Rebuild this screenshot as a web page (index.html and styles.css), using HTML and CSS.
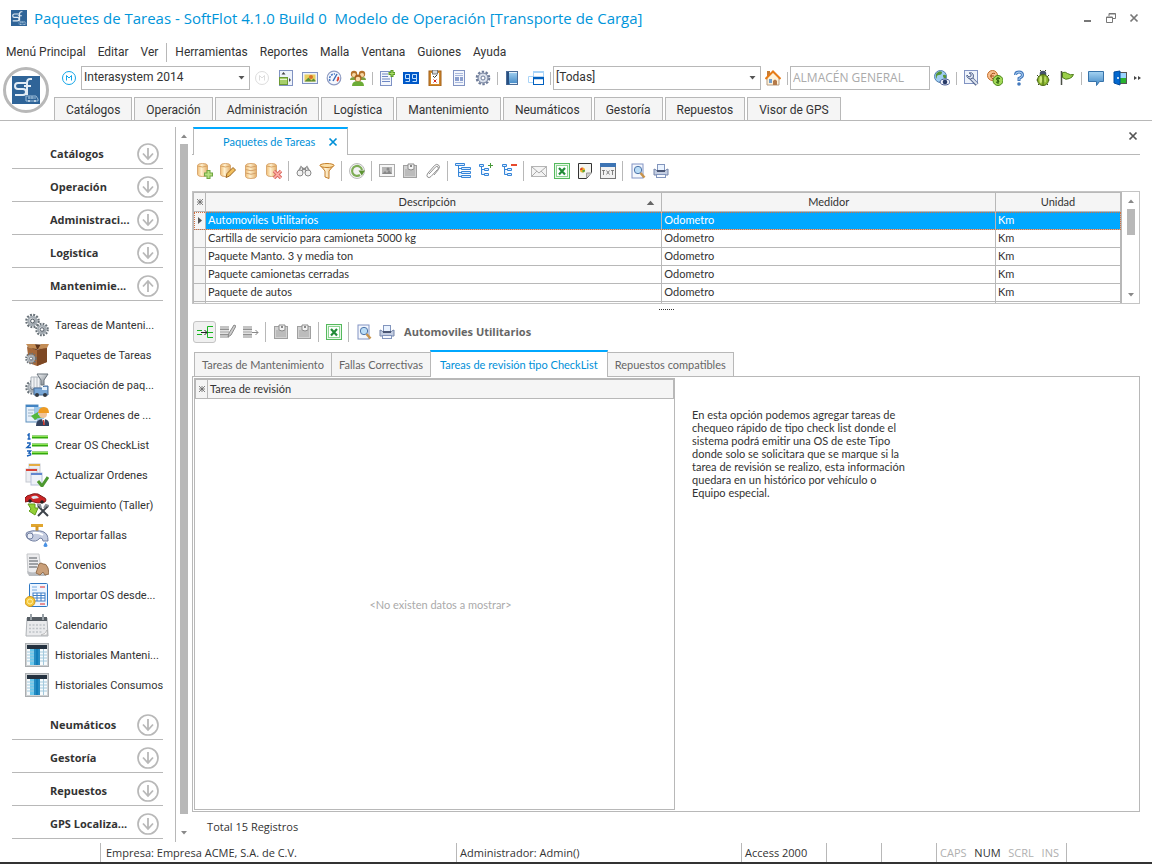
FILE: index.html
```html
<!DOCTYPE html>
<html lang="es">
<head>
    <meta charset="UTF-8">
    <meta name="viewport" content="width=device-width, initial-scale=1.0">
    <title>Paquetes de Tareas - SoftFlot</title>
    <link rel="stylesheet" href="styles.css">
</head>
<body>
<svg class="sprite" aria-hidden="true">
    <defs>
        <linearGradient id="gold" x1="0" y1="0" x2="1" y2="0"><stop offset="0" stop-color="#f0bc72"/><stop offset=".4" stop-color="#fff1d0"/><stop offset="1" stop-color="#e3ae68"/></linearGradient>
        <linearGradient id="steel" x1="0" y1="0" x2="1" y2="1"><stop offset="0" stop-color="#f4f6f8"/><stop offset="1" stop-color="#737c84"/></linearGradient>
        <linearGradient id="sky" x1="0" y1="0" x2="0" y2="1"><stop offset="0" stop-color="#a5d3f2"/><stop offset="1" stop-color="#3f86c4"/></linearGradient>
    </defs>

    <symbol id="logo" viewBox="0 0 28 28">
        <rect width="28" height="28" fill="#2f6498"/>
        <path d="M14 7H6q-3 0-3 3t3 3h5q3 0 3 3t-3 3H3" fill="none" stroke="#e4edf5" stroke-width="2"/>
        <path d="M20 3h-2q-3 0-3 4v12M12 10h7" fill="none" stroke="#e4edf5" stroke-width="2"/>
        <path d="M14 20h10l2 3v2H14z" fill="none" stroke="#9cbcd8"/>
        <path d="M16 22h8M17 20v3M20 20v3" stroke="#9cbcd8"/>
        <circle cx="17" cy="25" r="1" fill="#d6e4ef"/><circle cx="23" cy="25" r="1" fill="#d6e4ef"/>
    </symbol>

    <symbol id="clockm" viewBox="0 0 16 16">
        <circle cx="8" cy="8" r="6.500" fill="#fff" stroke="currentColor"/>
        <path d="M5.500 10.500V5.500L8 8l2.500-2.500v5" fill="none" stroke="currentColor"/>
    </symbol>
    <symbol id="layout" viewBox="0 0 16 16">
        <rect x="1.500" y=".5" width="13" height="15" fill="#eef3fb" stroke="#8193c2"/>
        <path d="M3.500 4.500h4L5.500 2zM11 8v4l2-2z" fill="#444"/>
        <rect x="1.500" y="7.500" width="8" height="7" fill="#a7cf6a" stroke="#6d9a35"/><path d="M2 9.500h7" stroke="#e6f4d0"/>
    </symbol>
    <symbol id="photo" viewBox="0 0 16 16">
        <rect x=".5" y="2.500" width="15" height="11" fill="#eef3fb" stroke="#8193c2"/>
        <rect x="2.500" y="4.500" width="11" height="7" fill="#e9cf5e"/>
        <path d="M2.500 11.500l4-4 3 3 2-2 2 2v1z" fill="#5d8f37"/><circle cx="9" cy="7" r="2" fill="#d8732a"/>
    </symbol>
    <symbol id="gauge" viewBox="0 0 16 16">
        <circle cx="8" cy="8" r="6.800" fill="#f5f8fd" stroke="#8e9bc2" stroke-width="1.200"/>
        <path d="M4 11a5 5 0 0 1 5-7" fill="none" stroke="#4978c2" stroke-width="1.500" stroke-dasharray="2 1"/>
        <path d="M7 11l4-7" stroke="#3c6bb5" stroke-width="1.500"/><path d="M12 7q1 2-1 4" fill="none" stroke="#e0402c" stroke-width="1.800"/>
    </symbol>
    <symbol id="people" viewBox="0 0 16 16">
        <path d="M0 10q0-3 4-3 2 0 4 1 2-1 4-1 4 0 4 3z" fill="#7fa03f"/>
        <circle cx="4" cy="4" r="3.200" fill="#b5722c"/><circle cx="12" cy="4" r="3.200" fill="#b5722c"/>
        <circle cx="4" cy="5" r="2" fill="#f7d7a3"/><circle cx="12" cy="5" r="2" fill="#f7d7a3"/>
        <path d="M2 16q0-5 6-5t6 5z" fill="#6cac36"/><circle cx="8" cy="8" r="3.500" fill="#a9611f"/><circle cx="8" cy="9" r="2.300" fill="#fbdcae"/>
    </symbol>
    <symbol id="listadd" viewBox="0 0 16 16">
        <rect x="1.500" y="1.500" width="11" height="14" fill="#f3f6fc" stroke="#7e92c5"/>
        <path d="M3 4h6M3 6.500h6M3 9h8M3 11.500h8" stroke="#6d87c4"/>
        <path d="M13 0v7M9.500 3.500h7" stroke="#5a9a25" stroke-width="3"/><path d="M13 1v5M10.500 3.500h5" stroke="#a9dc69"/>
    </symbol>
    <symbol id="gg" viewBox="0 0 16 16">
        <rect y="2" width="16" height="12" fill="#0058c8"/>
        <path d="M6 4.500H2.500v4H6M6.500 4v7.500h-4M13 4.500H9.500v4H13M13.500 4v7.500h-4" fill="none" stroke="#bfe0ff"/>
    </symbol>
    <symbol id="clipboard" viewBox="0 0 16 16">
        <rect x="2" y="1" width="12" height="15" fill="#d58b2c" stroke="#9e5c16"/>
        <rect x="4" y="3" width="8" height="11" fill="#fff"/><rect x="5.500" y="0" width="5" height="4" fill="#d6d9de" stroke="#777"/>
        <path d="M6 6l1.500 1.500L10 5" fill="none" stroke="#333"/><path d="M6.500 9.500l3 3m0-3l-3 3" stroke="#d52c1e"/>
    </symbol>
    <symbol id="form" viewBox="0 0 16 16">
        <rect x="2.500" y=".5" width="11" height="15" fill="#f3f6fc" stroke="#8193c2"/>
        <path d="M4 3.500h8M4 5.500h8M4 12.500h8" stroke="#a9b8dc"/><rect x="4" y="7" width="4" height="4" fill="#8b9fce"/><rect x="9" y="7" width="3" height="4" fill="#8b9fce"/>
    </symbol>
    <symbol id="gear" viewBox="0 0 16 16">
        <circle cx="8" cy="8" r="6.300" fill="none" stroke="#6d7b98" stroke-width="2" stroke-dasharray="2.400 1.550"/>
        <circle cx="8" cy="8" r="5" fill="#dbe1ec" stroke="#6d7b98"/><circle cx="8" cy="8" r="2" fill="#fff" stroke="#6d7b98"/>
    </symbol>
    <symbol id="book" viewBox="0 0 16 16">
        <rect x="2.500" y="1.500" width="11" height="13" fill="url(#sky)" stroke="#4a6c98"/><path d="M4 2v12.500" stroke="#284f80" stroke-width="2"/><path d="M5 2.500h8M6 13.500h7" stroke="#e4f0fa"/>
    </symbol>
    <symbol id="windows" viewBox="0 0 16 16">
        <path d="M5.500 1.500h10v5M.5 6.500h5v6h-5zM5.500 1v5" fill="none" stroke="#a9d4f8"/><path d="M5 2h11" stroke="#a9d4f8" stroke-width="2"/>
        <rect x="5.500" y="7.500" width="10" height="7" fill="#fff" stroke="#0060c0"/><path d="M5 8h11" stroke="#0060c0" stroke-width="2.500"/>
    </symbol>
    <symbol id="house" viewBox="0 0 16 16">
        <rect x="2" y="1" width="3" height="5" fill="#c77d35"/><path d="M2 8l6-6 6 6v7H2z" fill="#fff2d8" stroke="#b69b80"/>
        <path d="M.5 9L8 1.500 15.500 9" fill="none" stroke="#e67b16" stroke-width="2"/>
        <path d="M8 15v-4q2-3 4 0v4z" fill="#b57a49"/><path d="M4 9h3v4H4z" fill="#709fd0"/>
    </symbol>
    <symbol id="globe" viewBox="0 0 16 16">
        <circle cx="6.500" cy="6.500" r="6" fill="#9ecdf2" stroke="#537fae"/><path d="M2 4q3-4 6-2 0 3-3 3T3 9q-2-2-1-5M9 5q4-1 3 3-3 1-3-3" fill="#559538"/>
        <ellipse cx="11" cy="12" rx="5" ry="3" fill="#f5f7ff" stroke="#4a5d93"/><circle cx="11" cy="12" r="2.300" fill="#293b68"/>
    </symbol>
    <symbol id="wrench" viewBox="0 0 16 16">
        <rect x="1.500" y=".5" width="13" height="13" fill="#eef3fb" stroke="#8193c2"/>
        <path d="M7 7l7 7.500" stroke="#586991" stroke-width="4"/><path d="M7 7l7 7" stroke="#dde4f1" stroke-width="2"/>
        <path d="M6 3q3-1 4 1t0 4q-3 2-5 0T4 5l2 2 2-1V4z" fill="#dde4f1" stroke="#586991"/>
    </symbol>
    <symbol id="coins" viewBox="0 0 16 16">
        <circle cx="5.500" cy="5.500" r="5" fill="#f8c090" stroke="#c36e2c"/><path d="M8 3.500q-4-1-4 2.500t4 2.500M3 6h4" fill="none" stroke="#a8521d"/>
        <circle cx="11" cy="10.500" r="5" fill="#a2d957" stroke="#4b8517"/><path d="M13 8.500q-4-1-3.500.8.500 1.200 2 1.500 2 1-2.500 1.500M11 7v7" fill="none" stroke="#245509"/>
    </symbol>
    <symbol id="help" viewBox="0 0 16 16">
        <path d="M4.500 5q0-3 3.500-3t3.500 3Q11.500 7 8 8.500V11" fill="none" stroke="#4379bd" stroke-width="3"/><path d="M4.500 5q0-3 3.500-3t3.500 3Q11.500 7 8 8.500V10" fill="none" stroke="#b4d5f4"/>
        <circle cx="8" cy="14" r="1.800" fill="#4379bd"/>
    </symbol>
    <symbol id="bug" viewBox="0 0 16 16">
        <path d="M2 5l3 3M14 5l-3 3M1.500 10H14.500M3 15l3-3M13 15l-3-3M5 0l2 2M11 0L9 2" stroke="#3b4a20"/>
        <circle cx="8" cy="4" r="3.300" fill="#45536a"/><ellipse cx="8" cy="10" rx="5.500" ry="5.500" fill="#8fb931" stroke="#4b6a14"/><path d="M8 5v10" stroke="#4b6a14"/><ellipse cx="5.800" cy="9.500" rx="1.300" ry="3.500" fill="#cfe87f"/><ellipse cx="10.200" cy="9.500" rx="1" ry="3" fill="#b9d868"/>
    </symbol>
    <symbol id="flag" viewBox="0 0 16 16">
        <path d="M2.500 1v14" stroke="#4a4f45" stroke-width="1.500"/><path d="M3.500 2.500q3-1 5 1 3 2 6 1-1 3-4 4-4 2-7-1z" fill="#9bcf4a" stroke="#4e7d1b"/>
    </symbol>
    <symbol id="bubble" viewBox="0 0 16 16"><path d="M.5 1.500h15v10h-4l-3 4v-4h-8z" fill="url(#sky)" stroke="#3773aa"/></symbol>
    <symbol id="door" viewBox="0 0 16 16">
        <rect x="6.500" y="2.500" width="8" height="11" fill="#fff" stroke="#555"/><rect x="8" y="8" width="6" height="5" fill="#29b22f"/><rect x="8" y="3" width="6" height="5" fill="#9bd4ff"/>
        <path d="M2 2l6-1v14l-6-2z" fill="#0368cf" stroke="#014a9c"/><circle cx="6" cy="8" r="1" fill="#fff"/>
    </symbol>

    <symbol id="db" viewBox="0 0 16 16">
        <path d="M2.500 2.500q0-2 5.500-2t5.500 2v11q0 2-5.500 2t-5.500-2z" fill="url(#gold)" stroke="#d9a872"/>
        <path d="M2.500 3q5.500 2.500 11 0M2.500 6.500q5.500 2.500 11 0M2.500 10q5.500 2.500 11 0" fill="none" stroke="#d3a069"/>
    </symbol>
    <symbol id="dbbase" viewBox="0 0 16 16">
        <path d="M.5 2.500q0-2 5-2t5 2v9q0 2-5 2t-5-2z" fill="url(#gold)" stroke="#d9a872"/><path d="M.5 3q5 2 10 0" fill="none" stroke="#d9a463"/>
    </symbol>
    <symbol id="dbadd" viewBox="0 0 16 16"><use href="#dbbase"/><path d="M11.500 7v9M7 11.500h9" stroke="#6fa643" stroke-width="4"/><path d="M11.500 8v7M8 11.500h7" stroke="#b6e07f" stroke-width="2"/></symbol>
    <symbol id="dbedit" viewBox="0 0 16 16"><use href="#dbbase"/><path d="M6 14.500l1-4 6-6 2.500 2.500-6 6z" fill="#f1bf5e" stroke="#9a6420"/></symbol>
    <symbol id="dbdel" viewBox="0 0 16 16"><use href="#dbbase"/><path d="M8 8l7 7m0-7l-7 7" stroke="#d86a62" stroke-width="3.500"/><path d="M8 8l7 7m0-7l-7 7" stroke="#ffb0a8" stroke-width="1.500"/></symbol>
    <symbol id="binocular" viewBox="0 0 16 16">
        <path d="M5.500 3L2 9M10.500 3L14 9M6.500 4v6M9.500 4v6" stroke="#999" stroke-width="1.500"/><path d="M6 6h4" stroke="#8c8c8c" stroke-width="2"/>
        <circle cx="4" cy="10" r="3" fill="#f2f2f2" stroke="#888"/><circle cx="12" cy="10" r="3" fill="#f2f2f2" stroke="#888"/>
    </symbol>
    <symbol id="funnel" viewBox="0 0 16 16"><path d="M1 2l5 6v6l4 1.500V8l5-6z" fill="url(#gold)" stroke="#c47f2c"/><ellipse cx="8" cy="2.500" rx="7" ry="2" fill="#fce1aa" stroke="#c47f2c"/></symbol>
    <symbol id="refresh" viewBox="0 0 16 16">
        <circle cx="8" cy="8" r="7.500" fill="#f3f3f3" stroke="#bbb"/><path d="M11 12A5 5 0 1 1 13 7" fill="none" stroke="#7dac55" stroke-width="2.200"/><path d="M9.500 7.500h6.500l-3.200 5z" fill="#5d9433"/>
    </symbol>
    <symbol id="photogray" viewBox="0 0 16 16">
        <rect x=".5" y="1.500" width="15" height="12" fill="#f6f6f6" stroke="#aaa"/><rect x="3" y="4" width="10" height="7" fill="#b5b5b5"/><path d="M3 11l3-3 2 2 2-3 3 4z" fill="#888"/><circle cx="9" cy="6" r="1.500" fill="#888"/>
    </symbol>
    <symbol id="paste" viewBox="0 0 16 16">
        <rect x="1.500" y="2.500" width="13" height="12" fill="#d2d2d2" stroke="#a0a0a0"/><rect x="3" y="6" width="10" height="7" fill="#bcbcbc"/><path d="M6 1h6v5q-3 2-6 0z" fill="#f4f4f4" stroke="#8c8c8c"/><rect x="8" y="2" width="2" height="2" fill="#888"/>
    </symbol>
    <symbol id="clip" viewBox="0 0 16 16"><path d="M4 11l6.500-7q1.500-1.500 2.500 0t-.5 2.500L6 13.500q-2 2-3.500.5T3 10l6.500-7.500q2-2 4-.5t0 4.500L9 12" fill="none" stroke="#909090"/></symbol>
    <symbol id="tree" viewBox="0 0 16 16"><path d="M.5.500h9v2h-9zM6.500 4.500h9v2h-9zM6.500 8.500h9v2h-9zM6.500 12.500h9v2h-9zM3.500 3v10.500h3M3.500 5.500h3M3.500 9.500h3" fill="#dcecff" stroke="#3585d8"/></symbol>
    <symbol id="treeplus" viewBox="0 0 16 16"><path d="M1.500 1.500h4v2h-4zM6.500 5.500h4v2h-4zM6.500 10.500h4v2h-4zM3.500 4v7.500h3M3.500 6.500h3" fill="#dcecff" stroke="#3585d8"/><path d="M12.500 0v5M10 2.500h5" stroke="#4a9a3c"/></symbol>
    <symbol id="treeminus" viewBox="0 0 16 16"><path d="M1.500 1.500h4v2h-4zM6.500 5.500h4v2h-4zM6.500 10.500h4v2h-4zM3.500 4v7.500h3M3.500 6.500h3" fill="#dcecff" stroke="#3585d8"/><path d="M10 2h6" stroke="#e6492d" stroke-width="2"/></symbol>
    <symbol id="mail" viewBox="0 0 16 16"><rect x=".5" y="3.500" width="15" height="10" fill="#f4f4f4" stroke="#b5b5b5"/><path d="M1 4l7 6 7-6M1 13l5-5M15 13l-5-5" fill="none" stroke="#aaa"/></symbol>
    <symbol id="excel" viewBox="0 0 16 16">
        <rect x=".5" y=".5" width="15" height="15" fill="#e8f8e8" stroke="#55b95d"/><rect x="2.500" y="2.500" width="11" height="11" fill="#fff" stroke="#8bd491"/>
        <path d="M5 5l6 6.500M11 5l-6 6.500" stroke="#238b38" stroke-width="2.200"/>
    </symbol>
    <symbol id="chartdoc" viewBox="0 0 16 16"><path d="M1.500.5h13v9l-5 6h-8z" fill="#f4f4f0" stroke="#333"/><path d="M9.500 15V10h5" fill="#ccc" stroke="#999"/><circle cx="5.500" cy="7" r="2.500" fill="#f0b32a"/><path d="M5.500 7V4.500A2.500 2.500 0 0 0 3 7z" fill="#d9432d"/><path d="M5.500 7H8a2.500 2.500 0 0 1-2.500 2.500z" fill="#58a43c"/></symbol>
    <symbol id="txt" viewBox="0 0 16 16"><rect x=".5" y=".5" width="15" height="15" fill="#f2f2f2" stroke="#777"/><rect x="0" y="0" width="16" height="4" fill="#3d74b4"/><path d="M2 7.500h3M3.500 7.500V12M6.500 7.500l3 4m0-4l-3 4M11 7.500h3M12.500 7.500V12" stroke="#666" stroke-width=".8"/></symbol>
    <symbol id="preview" viewBox="0 0 16 16"><rect x="2" y="1" width="11" height="14" fill="#f4f7fd" stroke="#8294c3"/><circle cx="8" cy="7" r="3.700" fill="#b9dcf6" stroke="#4e73a8"/><path d="M10.500 10l4 4.500" stroke="#c8934b" stroke-width="2.500"/></symbol>
    <symbol id="print" viewBox="0 0 16 16"><rect x="4.500" y="1.500" width="7" height="6" fill="#eaf3ff" stroke="#8295bd"/><path d="M1 6q3 1 3 2h8q0-1 3-2v6H1z" fill="#c4cee2" stroke="#7485aa"/><path d="M4 8h8" stroke="#4a5674" stroke-width="2"/><rect x="3.500" y="11.500" width="9" height="3" fill="#f7faff" stroke="#8295bd"/></symbol>
    <symbol id="rowin" viewBox="0 0 16 16"><path d="M16 2.500h-5.500v11H16M10.500 8.500H16" fill="none" stroke="#14b61c"/><path d="M0 6.500h5M0 10.500h5" stroke="#14b61c"/><path d="M4 8.500h6M7.500 6L10 8.500 7.500 11" fill="none" stroke="#222"/></symbol>
    <symbol id="rowedit" viewBox="0 0 16 16"><path d="M0 3.500h9M0 8h9M0 12.500h9" stroke="#c4c4c4" stroke-width="3"/><path d="M0 5.500h9M0 10.500h9" stroke="#909090"/><path d="M8 13l1-4 5-8 2 1-5 9z" fill="#ccc" stroke="#888"/></symbol>
    <symbol id="rowout" viewBox="0 0 16 16"><path d="M0 3.500h9M0 8h9M0 12.500h9" stroke="#c4c4c4" stroke-width="3"/><path d="M0 5.500h9M0 10.500h9" stroke="#909090"/><path d="M9 8.500h6M12.500 6L15 8.500 12.500 11" fill="none" stroke="#888"/></symbol>
    <symbol id="down" viewBox="0 0 22 22"><circle cx="11" cy="11" r="10" fill="none" stroke="#b8b8b8" stroke-width="1.700"/><path d="M11 5v11M6 10.500l5 5.500 5-5.500" fill="none" stroke="#b8b8b8" stroke-width="1.800"/></symbol>
    <symbol id="up" viewBox="0 0 22 22"><circle cx="11" cy="11" r="10" fill="none" stroke="#b8b8b8" stroke-width="1.700"/><path d="M11 17V6M6 11.500L11 6l5 5.500" fill="none" stroke="#b8b8b8" stroke-width="1.800"/></symbol>
    <symbol id="caret" viewBox="0 0 6 4"><path d="M0 0h6L3 3.500z" fill="currentColor"/></symbol>
    <symbol id="cross" viewBox="0 0 10 10"><path d="M1.500 1.500l7 7m0-7l-7 7" stroke="currentColor" stroke-width="1.700"/></symbol>
    <symbol id="star" viewBox="0 0 8 8"><path d="M4 1v6M1 4h6M1 1l6 6M7 1L1 7" stroke="#666" stroke-width=".8"/></symbol>

    <symbol id="cog" viewBox="0 0 16 16">
        <circle cx="8" cy="8" r="6.500" fill="none" stroke="#687178" stroke-width="2.500" stroke-dasharray="2 1.400"/>
        <circle cx="8" cy="8" r="4.500" fill="url(#steel)" stroke="#a4acb3" stroke-width="2"/><circle cx="8" cy="8" r="2" fill="#fff" stroke="#4d5660"/>
    </symbol>
    <symbol id="s-gears" viewBox="0 0 24 24"><use href="#cog" x="0" y="0" width="15" height="16"/><use href="#cog" x="10" y="9" width="14" height="15"/></symbol>
    <symbol id="s-box" viewBox="0 0 24 24">
        <path d="M2 4l10 3 10-3v15l-10 4-8-3z" fill="#a5683a"/><path d="M12 7l10-3v15l-10 4z" fill="#7d4824"/><path d="M2 4l5-3 15 1-4 3-7 2z" fill="#5c3319"/><path d="M1 1l9 0 2 5-8-1zM24 1l-8 0-3 5 9-1z" fill="#c38d57"/>
        <use href="#cog" x="0" y="8" width="12" height="15"/>
    </symbol>
    <symbol id="s-assoc" viewBox="0 0 24 24">
        <use href="#cog" x="0" y="6" width="15" height="17"/><path d="M6 4h9v11H6z" fill="#f1f3f5" stroke="#a8b0b8"/><path d="M9 4v11M12 4v11" stroke="#b5bbc1"/>
        <path d="M12 1h11l-4 6v5h-3V7z" fill="url(#steel)" stroke="#6b747c"/><path d="M9 15h8l2-2h4v9H9z" fill="#79a7d6" stroke="#4a6f99"/><rect x="17" y="14" width="5" height="3" fill="#e3effa"/><circle cx="12" cy="22" r="2" fill="#343a42"/><circle cx="20" cy="22" r="2" fill="#343a42"/>
    </symbol>
    <symbol id="s-order" viewBox="0 0 24 24">
        <rect x="1" y="2" width="12" height="17" fill="#e6f0fa" stroke="#5d8fbe"/><path d="M1 3h12" stroke="#4284c4" stroke-width="2"/><rect x="9" y="4" width="10" height="13" fill="#9cc7ea"/>
        <path d="M3 7h7M3 10h5M3 13h5" stroke="#9db2c6"/><path d="M6 13l7-4v3q4 0 5 3-5-1-8 2z" fill="#52b83d"/>
        <circle cx="18" cy="11" r="4" fill="#f0c398"/><path d="M13 10q1-6 6-6t5 6z" fill="#ee9b22"/><path d="M11 23q0-7 7-7t6 7z" fill="#33425f"/><path d="M17 16h3l-1 6z" fill="#fff"/><path d="M18 17h1l1 5h-2z" fill="#c93a31"/>
    </symbol>
    <symbol id="s-check" viewBox="0 0 24 24">
        <path d="M2.500 2.500L4 1v5M2.500 6h3M2 10h3v1.500L2 14.500h4M2 18h3.500l-1.500 2q2 0 1.500 2l-3.500 1" fill="none" stroke="#1c63ba" stroke-width="1.500"/>
        <path d="M7 4h16M7 12h16M7 20h16" stroke="#33a80d" stroke-width="3"/><path d="M7 3.500h16M7 11.500h16M7 19.500h16" stroke="#8be352"/>
    </symbol>
    <symbol id="s-update" viewBox="0 0 24 24">
        <rect x="4" y="1" width="11" height="13" fill="#eceef2" stroke="#c6cad2"/><path d="M4 2h11" stroke="#e4ad43" stroke-width="2"/><rect x="1" y="6" width="11" height="13" fill="#eceef2" stroke="#c6cad2"/><path d="M1 7h11" stroke="#d84237" stroke-width="2"/><rect x="6" y="10" width="11" height="12" fill="#eef1f8" stroke="#b8c2da"/><path d="M6 11h11" stroke="#6286ce" stroke-width="2"/>
        <path d="M13 18l4 5 6-9" fill="none" stroke="#4c982f" stroke-width="3"/>
    </symbol>
    <symbol id="s-track" viewBox="0 0 24 24">
        <path d="M0 5q2-3 5-3 3-2 8-1l5 3q3 1 3 3l-1 2-7 1-8-2-5 1z" fill="#cc2526" stroke="#811718"/><path d="M6 4q3-2 6-1l2 2-6 1z" fill="#dfe6ee"/><circle cx="5" cy="8" r="1.800" fill="#222"/><circle cx="17" cy="9" r="1.800" fill="#222"/>
        <path d="M3 11h7v4h3l-3 7-6-4 2-2z" fill="#93cf35" stroke="#629d1a"/><path d="M13 13l10 10M23 13L13 23" stroke="#3d434a" stroke-width="2"/><path d="M12 12l3 0 1 3M24 13l-3-1-2 3" fill="none" stroke="#8a939b" stroke-width="2"/>
    </symbol>
    <symbol id="s-tap" viewBox="0 0 24 24">
        <path d="M6 2.500h12" stroke="#e1a62f" stroke-width="3"/><path d="M12 3v5" stroke="#d59722" stroke-width="3"/><path d="M3 9q5-2 8-1 8-1 11 4 1 2 1 6h-5q0-3-3-3-4 5-10 2-4-2-4-5t2-3z" fill="#c4cce0" stroke="#7582a3"/><path d="M8 10q5-1 10 2" fill="none" stroke="#fff" stroke-width="2"/><path d="M20.500 19q4 5 0 5t0-5" fill="#4a91e4"/><circle cx="5" cy="13" r="3" fill="#e9edf6" stroke="#7582a3"/>
    </symbol>
    <symbol id="s-deal" viewBox="0 0 24 24">
        <path d="M2 1h12l2 17-13 3z" fill="#ececee" stroke="#c5c7ca"/><path d="M4 5h8M4 8h9M4 11h9M4 14h8" stroke="#84888d" stroke-width="1.500"/><path d="M2 18q7 3 20 2l-1 3H4z" fill="#b9bcc0"/><path d="M11 20l3-9q2-2 4 0 3-1 5 4l1 6-4 1-2-3-3 3z" fill="#c99f79" stroke="#94704f"/>
    </symbol>
    <symbol id="s-import" viewBox="0 0 24 24">
        <rect x="4.500" y=".5" width="18" height="23" fill="#edf5ff" stroke="#2f78c4" rx="1"/><path d="M7 4h5M7 7h5" stroke="#76aae0"/><path d="M15 4h5M15 21h5" stroke="#e12b2b"/><rect x="8" y="10" width="12" height="8" fill="#fff" stroke="#3e7fc7"/><path d="M8 12.500h12M8 15h12M12 10v8M16 10v8" stroke="#3e7fc7"/>
        <circle cx="5" cy="18.500" r="5" fill="#f4c73c" stroke="#d29512"/><circle cx="5" cy="18.500" r="2.500" fill="none" stroke="#fff0a8"/>
    </symbol>
    <symbol id="s-cal" viewBox="0 0 24 24">
        <path d="M2 5h20l1 18H1z" fill="#e9eaec" stroke="#aeb2b6"/><path d="M2 4h20v4H2z" fill="#555d64"/><path d="M6 1v6M18 1v6" stroke="#9aa2a8" stroke-width="2"/><path d="M4 12h16M4 15.500h16M4 19h14" stroke="#bfc3c7" stroke-dasharray="2 1.500" stroke-width="1.500"/><path d="M16 22q5-1 6-5v5z" fill="#fff" stroke="#999" stroke-width=".5"/>
    </symbol>
    <symbol id="s-hist" viewBox="0 0 24 24">
        <rect x=".5" y=".5" width="23" height="23" fill="#cfd2d4" stroke="#aaaeb1"/><rect x="2" y="2" width="20" height="4" fill="#23313f"/><rect x="2" y="6" width="20" height="16" fill="#f7fbfd"/><rect x="5" y="6" width="4" height="16" fill="#69c8ec"/><rect x="9" y="6" width="6" height="16" fill="#127db8"/>
        <path d="M2 9h7M2 12h7M2 15h7M2 18h7M15 9h7M15 12h7M15 15h7M15 18h7M18.500 6v16" stroke="#a3c9dd"/><path d="M10 6v16M14 6v16" stroke="#399bcd"/>
    </symbol>
</svg>

<div class="app">
    <header>
        <div class="titlebar">
            <svg class="icon"><use href="#logo"/></svg>
            <h1>Paquetes de Tareas - SoftFlot 4.1.0 Build 0&nbsp; Modelo de Operación [Transporte de Carga]</h1>
            <div class="window-buttons">
                <button type="button" aria-label="Minimizar"><svg viewBox="0 0 10 10"><path d="M1 8h7" stroke="currentColor" stroke-width="2"/></svg></button>
                <button type="button" aria-label="Restaurar"><svg viewBox="0 0 10 10"><path d="M3 3V.5h6.500v5H7M.5 4h6v5.500h-6zM3 1h6.500M.5 4.500h6" fill="none" stroke="currentColor"/></svg></button>
                <button type="button" aria-label="Cerrar"><svg><use href="#cross"/></svg></button>
            </div>
        </div>

        <nav class="menu">
            <button type="button">Menú Principal</button>
            <button type="button">Editar</button>
            <button type="button">Ver</button>
            <span class="sep"></span>
            <button type="button">Herramientas</button>
            <button type="button">Reportes</button>
            <button type="button">Malla</button>
            <button type="button">Ventana</button>
            <button type="button">Guiones</button>
            <button type="button">Ayuda</button>
        </nav>

        <div class="ribbon">
            <button type="button" class="app-button" aria-label="SoftFlot"><svg><use href="#logo"/></svg></button>
            <div class="ribbon-body">
                <div class="quickbar">
                    <button type="button" class="tool clock" aria-label="Modelo"><svg><use href="#clockm"/></svg></button>
                    <div class="combo combo-db">
                        <select aria-label="Base de datos"><option>Interasystem 2014</option></select>
                        <svg><use href="#caret"/></svg>
                    </div>
                    <button type="button" class="tool clock off" aria-label="Modelo inactivo"><svg><use href="#clockm"/></svg></button>
                    <button type="button" class="tool" aria-label="Diseño"><svg><use href="#layout"/></svg></button>
                    <button type="button" class="tool" aria-label="Imagen"><svg><use href="#photo"/></svg></button>
                    <button type="button" class="tool" aria-label="Indicadores"><svg><use href="#gauge"/></svg></button>
                    <button type="button" class="tool" aria-label="Usuarios"><svg><use href="#people"/></svg></button>
                    <span class="sep"></span>
                    <button type="button" class="tool" aria-label="Nueva lista"><svg><use href="#listadd"/></svg></button>
                    <button type="button" class="tool" aria-label="Contador"><svg><use href="#gg"/></svg></button>
                    <button type="button" class="tool" aria-label="Revisión"><svg><use href="#clipboard"/></svg></button>
                    <button type="button" class="tool" aria-label="Formulario"><svg><use href="#form"/></svg></button>
                    <button type="button" class="tool" aria-label="Opciones"><svg><use href="#gear"/></svg></button>
                    <span class="sep"></span>
                    <button type="button" class="tool" aria-label="Libro"><svg><use href="#book"/></svg></button>
                    <button type="button" class="tool" aria-label="Ventanas"><svg><use href="#windows"/></svg></button>
                    <span class="sep"></span>
                    <div class="combo combo-branch">
                        <select aria-label="Sucursal"><option>[Todas]</option></select>
                        <svg><use href="#caret"/></svg>
                    </div>
                    <button type="button" class="tool" aria-label="Inicio"><svg><use href="#house"/></svg></button>
                    <span class="sep"></span>
                    <input type="text" class="store" aria-label="Almacén" value="ALMACÉN GENERAL" disabled>
                    <button type="button" class="tool" aria-label="Mapa"><svg><use href="#globe"/></svg></button>
                    <span class="sep"></span>
                    <button type="button" class="tool" aria-label="Herramientas"><svg><use href="#wrench"/></svg></button>
                    <button type="button" class="tool" aria-label="Monedas"><svg><use href="#coins"/></svg></button>
                    <button type="button" class="tool" aria-label="Ayuda"><svg><use href="#help"/></svg></button>
                    <button type="button" class="tool" aria-label="Reportar error"><svg><use href="#bug"/></svg></button>
                    <button type="button" class="tool" aria-label="Marcador"><svg><use href="#flag"/></svg></button>
                    <span class="sep"></span>
                    <button type="button" class="tool" aria-label="Mensajes"><svg><use href="#bubble"/></svg></button>
                    <button type="button" class="tool" aria-label="Salir"><svg><use href="#door"/></svg></button>
                    <button type="button" class="more" aria-label="Más"><svg viewBox="0 0 8 6"><path d="M0 1v4l3-2zM4 1v4l3-2z" fill="#444"/></svg></button>
                </div>
                <nav class="ribbon-tabs">
                    <button type="button">Catálogos</button>
                    <button type="button">Operación</button>
                    <button type="button">Administración</button>
                    <button type="button">Logística</button>
                    <button type="button">Mantenimiento</button>
                    <button type="button">Neumáticos</button>
                    <button type="button">Gestoría</button>
                    <button type="button">Repuestos</button>
                    <button type="button">Visor de GPS</button>
                </nav>
            </div>
        </div>
    </header>

    <div class="content">
        <aside class="sidebar">
            <button type="button" class="group"><span>Catálogos</span><svg><use href="#down"/></svg></button>
            <button type="button" class="group"><span>Operación</span><svg><use href="#down"/></svg></button>
            <button type="button" class="group"><span>Administraci...</span><svg><use href="#down"/></svg></button>
            <button type="button" class="group"><span>Logistica</span><svg><use href="#down"/></svg></button>
            <button type="button" class="group"><span>Mantenimie...</span><svg><use href="#up"/></svg></button>
            <ul class="group-items">
                <li><a href="#"><svg><use href="#s-gears"/></svg><span>Tareas de Manteni...</span></a></li>
                <li><a href="#"><svg><use href="#s-box"/></svg><span>Paquetes de Tareas</span></a></li>
                <li><a href="#"><svg><use href="#s-assoc"/></svg><span>Asociación de paq...</span></a></li>
                <li><a href="#"><svg><use href="#s-order"/></svg><span>Crear Ordenes de ...</span></a></li>
                <li><a href="#"><svg><use href="#s-check"/></svg><span>Crear OS CheckList</span></a></li>
                <li><a href="#"><svg><use href="#s-update"/></svg><span>Actualizar Ordenes</span></a></li>
                <li><a href="#"><svg><use href="#s-track"/></svg><span>Seguimiento (Taller)</span></a></li>
                <li><a href="#"><svg><use href="#s-tap"/></svg><span>Reportar fallas</span></a></li>
                <li><a href="#"><svg><use href="#s-deal"/></svg><span>Convenios</span></a></li>
                <li><a href="#"><svg><use href="#s-import"/></svg><span>Importar OS desde...</span></a></li>
                <li><a href="#"><svg><use href="#s-cal"/></svg><span>Calendario</span></a></li>
                <li><a href="#"><svg><use href="#s-hist"/></svg><span>Historiales Manteni...</span></a></li>
                <li><a href="#"><svg><use href="#s-hist"/></svg><span>Historiales Consumos</span></a></li>
            </ul>
            <button type="button" class="group"><span>Neumáticos</span><svg><use href="#down"/></svg></button>
            <button type="button" class="group"><span>Gestoría</span><svg><use href="#down"/></svg></button>
            <button type="button" class="group"><span>Repuestos</span><svg><use href="#down"/></svg></button>
            <button type="button" class="group"><span>GPS Localiza...</span><svg><use href="#down"/></svg></button>
        </aside>
        <div class="scroll side-scroll">
            <svg class="arrow flip"><use href="#caret"/></svg>
            <div class="thumb"></div>
            <svg class="arrow"><use href="#caret"/></svg>
        </div>

        <main>
            <div class="doc-tabs">
                <div class="doc-tab">
                    <span>Paquetes de Tareas</span>
                    <button type="button" aria-label="Cerrar pestaña"><svg><use href="#cross"/></svg></button>
                </div>
                <button type="button" class="close-all" aria-label="Cerrar"><svg><use href="#cross"/></svg></button>
            </div>

            <div class="toolbar">
                <button type="button" class="tool" aria-label="Agregar"><svg><use href="#dbadd"/></svg></button>
                <button type="button" class="tool" aria-label="Editar"><svg><use href="#dbedit"/></svg></button>
                <button type="button" class="tool" aria-label="Consultar"><svg><use href="#db"/></svg></button>
                <button type="button" class="tool" aria-label="Eliminar"><svg><use href="#dbdel"/></svg></button>
                <span class="sep"></span>
                <button type="button" class="tool" aria-label="Buscar"><svg><use href="#binocular"/></svg></button>
                <button type="button" class="tool" aria-label="Filtrar"><svg><use href="#funnel"/></svg></button>
                <span class="sep"></span>
                <button type="button" class="tool" aria-label="Refrescar"><svg><use href="#refresh"/></svg></button>
                <span class="sep"></span>
                <button type="button" class="tool" aria-label="Imagen"><svg><use href="#photogray"/></svg></button>
                <button type="button" class="tool" aria-label="Notas"><svg><use href="#paste"/></svg></button>
                <button type="button" class="tool" aria-label="Adjuntar"><svg><use href="#clip"/></svg></button>
                <span class="sep"></span>
                <button type="button" class="tool" aria-label="Agrupar"><svg><use href="#tree"/></svg></button>
                <button type="button" class="tool" aria-label="Expandir"><svg><use href="#treeplus"/></svg></button>
                <button type="button" class="tool" aria-label="Contraer"><svg><use href="#treeminus"/></svg></button>
                <span class="sep"></span>
                <button type="button" class="tool" aria-label="Correo"><svg><use href="#mail"/></svg></button>
                <button type="button" class="tool" aria-label="Excel"><svg><use href="#excel"/></svg></button>
                <button type="button" class="tool" aria-label="Reporte"><svg><use href="#chartdoc"/></svg></button>
                <button type="button" class="tool" aria-label="Texto"><svg><use href="#txt"/></svg></button>
                <span class="sep"></span>
                <button type="button" class="tool" aria-label="Vista previa"><svg><use href="#preview"/></svg></button>
                <button type="button" class="tool" aria-label="Imprimir"><svg><use href="#print"/></svg></button>
            </div>

            <div class="grid-box">
                <div class="grid-view">
                    <table class="grid">
                        <thead>
                            <tr>
                                <th class="mark"><svg class="star"><use href="#star"/></svg></th>
                                <th>Descripción<svg class="sort"><use href="#caret"/></svg></th>
                                <th class="col-meter">Medidor</th>
                                <th class="col-unit">Unidad</th>
                            </tr>
                        </thead>
                        <tbody>
                            <tr class="selected"><td class="mark"><svg viewBox="0 0 4 7"><path d="M0 0v7l4-3.500z" fill="#555"/></svg></td><td>Automoviles Utilitarios</td><td>Odometro</td><td>Km</td></tr>
                            <tr><td class="mark"></td><td>Cartilla de servicio para camioneta 5000 kg</td><td>Odometro</td><td>Km</td></tr>
                            <tr><td class="mark"></td><td>Paquete Manto. 3 y media ton</td><td>Odometro</td><td>Km</td></tr>
                            <tr><td class="mark"></td><td>Paquete camionetas cerradas</td><td>Odometro</td><td>Km</td></tr>
                            <tr><td class="mark"></td><td>Paquete de autos</td><td>Odometro</td><td>Km</td></tr>
                            <tr><td class="mark"></td><td></td><td></td><td></td></tr>
                        </tbody>
                    </table>
                </div>
                <div class="scroll">
                    <svg class="arrow flip"><use href="#caret"/></svg>
                    <div class="thumb"></div>
                    <svg class="arrow"><use href="#caret"/></svg>
                </div>
            </div>
            <div class="splitter"><span></span></div>

            <div class="toolbar detail-toolbar">
                <button type="button" class="tool pressed" aria-label="Insertar"><svg><use href="#rowin"/></svg></button>
                <button type="button" class="tool" aria-label="Modificar"><svg><use href="#rowedit"/></svg></button>
                <button type="button" class="tool" aria-label="Quitar"><svg><use href="#rowout"/></svg></button>
                <span class="sep"></span>
                <button type="button" class="tool" aria-label="Copiar"><svg><use href="#paste"/></svg></button>
                <button type="button" class="tool" aria-label="Pegar"><svg><use href="#paste"/></svg></button>
                <span class="sep"></span>
                <button type="button" class="tool" aria-label="Excel"><svg><use href="#excel"/></svg></button>
                <span class="sep"></span>
                <button type="button" class="tool" aria-label="Vista previa"><svg><use href="#preview"/></svg></button>
                <button type="button" class="tool" aria-label="Imprimir"><svg><use href="#print"/></svg></button>
                <h2>Automoviles Utilitarios</h2>
            </div>

            <div class="detail-tabs">
                <button type="button">Tareas de Mantenimiento</button>
                <button type="button">Fallas Correctivas</button>
                <button type="button" class="active">Tareas de revisión tipo CheckList</button>
                <button type="button">Repuestos compatibles</button>
            </div>
            <section class="detail">
                <div class="detail-grid">
                    <table class="grid">
                        <thead>
                            <tr>
                                <th class="mark"><svg class="star"><use href="#star"/></svg></th>
                                <th class="left">Tarea de revisión</th>
                            </tr>
                        </thead>
                    </table>
                    <div class="empty">&lt;No existen datos a mostrar&gt;</div>
                </div>
                <p>En esta opción podemos agregar tareas de chequeo rápido de tipo check list donde el sistema podrá emitir una OS de este Tipo donde solo se solicitara que se marque si la tarea de revisión se realizo, esta información quedara en un histórico por vehículo o Equipo especial.</p>
            </section>
            <div class="total">Total 15 Registros</div>
        </main>
    </div>

    <footer>
        <span class="f-start"></span>
        <span class="f-company">Empresa: Empresa ACME, S.A. de C.V.</span>
        <span class="f-user">Administrador: Admin()</span>
        <span class="f-access">Access 2000</span>
        <span class="f-blank"></span>
        <span class="f-blank"></span>
        <span class="f-keys"><i>CAPS</i><b>NUM</b><i>SCRL</i><i>INS</i></span>
        <span class="f-end"></span>
    </footer>
</div>
</body>
</html>
```

FILE: styles.css
```css
* {
    box-sizing: border-box;
}
body {
    margin: 0;
    background: #fff;
    color: #333;
    font-family: "Open Sans", "Noto Sans", sans-serif;
    font-size: 12px;
}
button {
    margin: 0;
    padding: 0;
    border: 0;
    background: none;
    color: inherit;
    font: inherit;
}
svg {
    display: block;
    flex: none;
}
.sprite {
    position: absolute;
    width: 0;
    height: 0;
}
.app {
    display: flex;
    flex-direction: column;
    min-height: 100vh;
}

/* title and menu */
.titlebar {
    display: flex;
    align-items: center;
    height: 38px;
    padding: 0 13px 2px 11px;
}
.titlebar .icon {
    width: 16px;
    height: 16px;
}
h1 {
    flex: 1;
    margin: 0 0 0 7px;
    color: #0095da;
    font-size: 15px;
    font-weight: normal;
    white-space: nowrap;
}
.window-buttons {
    display: flex;
    gap: 13px;
    color: #777;
}
.window-buttons svg {
    width: 10px;
    height: 10px;
}
.menu {
    display: flex;
    align-items: center;
    gap: 12px;
    height: 28px;
    padding-left: 6px;
    font-family: Roboto, sans-serif;
}
.menu .sep {
    width: 1px;
    height: 19px;
    margin: 0 -4px;
    background: #b8b8b8;
}

/* quick bar and tabs */
.ribbon {
    display: flex;
    height: 55px;
    border-bottom: 1px solid #b8b8b8;
}
.app-button {
    display: flex;
    align-items: center;
    justify-content: center;
    width: 46px;
    height: 46px;
    margin: 1px 5px 0 3px;
    border: 3px solid #b8b8b8;
    border-radius: 50%;
}
.app-button svg {
    width: 28px;
    height: 28px;
}
.ribbon-body {
    display: flex;
    flex: 1;
    flex-direction: column;
    justify-content: space-between;
    min-width: 0;
}
.quickbar {
    display: flex;
    align-items: center;
    height: 24px;
    padding-left: 3px;
}
.tool {
    display: flex;
    align-items: center;
    justify-content: center;
    width: 24px;
    height: 22px;
}
.tool svg {
    width: 16px;
    height: 16px;
}
.clock {
    color: #12a5e8;
}
.clock.off {
    color: #ddd;
}
.quickbar .sep {
    width: 1px;
    height: 13px;
    margin: 0 2px;
    background: #b8b8b8;
}
.combo {
    position: relative;
    height: 24px;
}
.combo-db {
    flex: 0 1 169px;
}
.combo-branch {
    flex: 0 1 208px;
}
.combo select {
    width: 100%;
    height: 24px;
    padding: 0 16px 2px 2px;
    border: 1px solid #b8b8b8;
    border-radius: 0;
    background: #fff;
    color: #333;
    font-family: Roboto, sans-serif;
    font-size: 12px;
    appearance: none;
}
.combo svg {
    position: absolute;
    top: 10px;
    right: 5px;
    width: 7px;
    height: 4px;
    color: #555;
}
.store {
    flex: 0 1 140px;
    min-width: 0;
    height: 24px;
    padding: 0 2px 2px;
    border: 1px solid #b8b8b8;
    background: #fff;
    color: #aaa;
    font: inherit;
}
.more svg {
    width: 8px;
    height: 6px;
    margin-left: 2px;
}
.ribbon-tabs {
    display: flex;
    gap: 2px;
    font-family: Roboto, sans-serif;
}
.ribbon-tabs button {
    height: 23px;
    padding: 1px 11px 0;
    border: 1px solid #b8b8b8;
    border-bottom: 0;
    background: #f5f5f5;
}

/* side bar */
.content {
    display: flex;
    flex: 1;
}
.sidebar {
    flex: 0 0 175px;
    margin-top: 6px;
    padding: 9px 12px 2px;
    border-right: 1px solid #b8b8b8;
    font-size: 11px;
    white-space: nowrap;
}
.group {
    display: flex;
    align-items: center;
    justify-content: space-between;
    width: 100%;
    height: 33px;
    padding: 3px 4px 0 38px;
    border-bottom: 1px solid #b8b8b8;
    font-weight: bold;
}
.group svg {
    width: 22px;
    height: 22px;
}
.group-items {
    margin: 0;
    padding: 9px 0 7px 13px;
    list-style: none;
    font-family: Roboto, sans-serif;
}
.group-items a {
    display: flex;
    align-items: center;
    gap: 6px;
    height: 30px;
    color: #333;
    text-decoration: none;
}
.group-items svg {
    width: 24px;
    height: 24px;
}
.scroll {
    display: flex;
    flex: 0 0 17px;
    flex-direction: column;
    align-items: center;
    color: #888;
}
.arrow {
    width: 6px;
    height: 4px;
}
.flip {
    transform: rotate(180deg);
}
.thumb {
    width: 8px;
    background: #b8b8b8;
}
.side-scroll {
    flex-basis: 16px;
    padding: 13px 0 7px;
}
.side-scroll .thumb {
    flex: 1;
    margin: 6px 0 17px;
}

/* document */
main {
    display: flex;
    flex: 1;
    flex-direction: column;
    min-width: 0;
    padding-right: 12px;
    font-family: Lato, sans-serif;
    font-size: 11px;
}
.doc-tabs {
    display: flex;
    align-items: flex-start;
    justify-content: space-between;
    height: 34px;
    padding-top: 6px;
    border-bottom: 1px solid #b8b8b8;
}
.doc-tab {
    display: flex;
    align-items: center;
    gap: 13px;
    height: 28px;
    margin-left: 1px;
    padding: 0 9px 1px 29px;
    border: 1px solid #b8b8b8;
    border-top: 2px solid #00a8ff;
    border-bottom: 0;
    background: #fff;
    color: #0090d8;
}
.doc-tab svg,
.close-all svg {
    width: 10px;
    height: 10px;
}
.close-all {
    padding: 4px 2px;
    color: #555;
}
.toolbar {
    display: flex;
    align-items: center;
    height: 36px;
    padding: 0 0 4px 1px;
}
.toolbar .tool {
    width: 23px;
}
.toolbar .sep {
    width: 1px;
    height: 20px;
    margin: 0 3px;
    background: #b8b8b8;
}
.grid-box {
    display: flex;
    height: 113px;
    border: 1px solid #c4c4c4;
}
.grid-view {
    flex: 1;
    overflow: hidden;
    border-right: 1px solid #b8b8b8;
}
.grid {
    width: 100%;
    border-collapse: collapse;
    table-layout: fixed;
    line-height: 13px;
}
.grid th,
.grid td {
    height: 18px;
    padding: 0 2px 2px;
    border: 1px solid #b8b8b8;
    text-align: left;
    white-space: nowrap;
}
.grid th {
    height: 19px;
    background: #f5f5f5;
    font-weight: normal;
    text-align: center;
}
.grid th.left {
    text-align: left;
}
.grid .mark {
    width: 12px;
    padding: 0;
    background: #f5f5f5;
}
.mark svg {
    width: 4px;
    height: 7px;
    margin: 0 auto;
}
.mark .star {
    width: 8px;
    height: 8px;
}
.col-meter {
    width: 36%;
}
.col-unit {
    width: 125px;
}
.sort {
    float: right;
    width: 9px;
    height: 5px;
    margin: 5px 4px 0 0;
    color: #666;
    transform: rotate(180deg);
}
.selected {
    outline: 1px dotted #d07040;
    outline-offset: -1px;
}
.selected td {
    background: #00a8ff;
    color: #fff;
}
.grid-box .scroll {
    padding: 7px 0 6px;
}
.grid-box .thumb {
    height: 26px;
    margin: 6px 0 auto;
}
.splitter {
    display: flex;
    justify-content: center;
    height: 10px;
}
.splitter span {
    width: 15px;
    height: 6px;
    border-bottom: 1px dotted #333;
}
.detail-toolbar {
    padding-bottom: 1px;
}
.pressed {
    border: 1px solid #c4c4c4;
    border-radius: 3px;
    background: #f0f0f0;
}
.toolbar h2 {
    margin: 0 0 0 6px;
    color: #666;
    font-family: "Open Sans", sans-serif;
    font-size: 11px;
}
.detail-tabs {
    display: flex;
    align-items: flex-end;
    padding-left: 2px;
}
.detail-tabs button {
    height: 24px;
    margin-right: -1px;
    padding: 0 7px;
    border: 1px solid #b8b8b8;
    border-bottom: 0;
    background: #f5f5f5;
    color: #666;
}
.detail-tabs .active {
    position: relative;
    height: 27px;
    margin-bottom: -1px;
    padding: 0 9px;
    border-top: 2px solid #00a8ff;
    background: #fff;
    color: #0090d8;
}
.detail {
    display: flex;
    flex: 1;
    padding: 1px;
    border: 1px solid #b8b8b8;
}
.detail-grid {
    display: flex;
    flex: 0 1 481px;
    flex-direction: column;
    border: 1px solid #b8b8b8;
}
.empty {
    display: flex;
    flex: 1;
    align-items: center;
    justify-content: center;
    padding-left: 12px;
    color: #aaa;
}
.detail p {
    width: 220px;
    margin: 30px 0 0 17px;
    line-height: 13px;
}
.total {
    height: 30px;
    padding-left: 15px;
    line-height: 30px;
    font-family: "Open Sans", sans-serif;
}

/* status bar */
footer {
    display: flex;
    align-items: center;
    height: 22px;
    border-bottom: 2px solid #333;
    font-size: 11px;
}
footer > span {
    height: 19px;
    padding-left: 3px;
    border-left: 1px solid #b8b8b8;
    line-height: 19px;
}
footer .f-start {
    width: 100px;
    border-left: 0;
}
footer .f-company {
    flex: 355;
    padding-left: 5px;
}
.f-user {
    flex: 285;
}
.f-access {
    width: 85px;
}
.f-blank {
    width: 55px;
}
footer .f-keys {
    display: flex;
    justify-content: space-between;
    width: 130px;
    padding-right: 7px;
}
.f-keys i {
    color: #b0b0b0;
    font-style: normal;
}
.f-keys b {
    font-weight: normal;
}
.f-end {
    width: 86px;
}
```
